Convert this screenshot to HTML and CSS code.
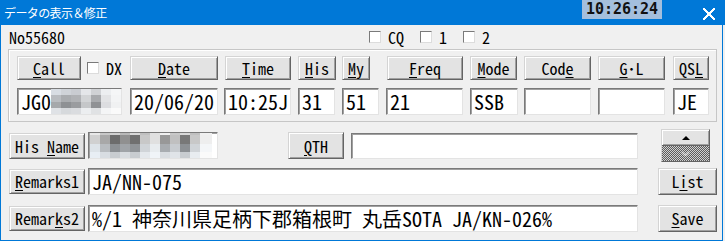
FILE: index.html
```html
<!DOCTYPE html>
<html lang="ja">
<head>
    <meta charset="UTF-8">
    <title>データの表示＆修正</title>
    <link rel="stylesheet" href="styles.css">
</head>
<body>
<div class="window">
    <div class="titlebar">
        <span class="title">データの表示＆修正</span>
        <span class="clock">10:26:24</span>
        <span class="close"></span>
    </div>

    <div class="client">
        <div class="top-row">
            <span class="qso-no">No55680</span>
            <label class="check"><span class="box"></span>CQ</label>
            <label class="check"><span class="box"></span>1</label>
            <label class="check"><span class="box"></span>2</label>
        </div>

        <div class="group">
            <div class="log-grid">
                <div class="cell">
                    <button class="btn b-call"><u>C</u>all</button>
                    <label class="check dx"><span class="box"></span>DX</label>
                </div>
                <div class="cell"><button class="btn b-date"><u>D</u>ate</button></div>
                <div class="cell"><button class="btn b-time"><u>T</u>ime</button></div>
                <div class="cell"><button class="btn b-his"><u>H</u>is</button></div>
                <div class="cell"><button class="btn b-my"><u>M</u>y</button></div>
                <div class="cell"><button class="btn b-freq"><u>F</u>req</button></div>
                <div class="cell"><button class="btn b-mode"><u>M</u>ode</button></div>
                <div class="cell"><button class="btn b-code">Cod<u>e</u></button></div>
                <div class="cell"><button class="btn b-gl"><u>G</u>･L</button></div>
                <div class="cell"><button class="btn b-qsl">QS<u>L</u></button></div>

                <div class="field f-call">JG0<svg class="mosaic" width="70" height="25" viewBox="0 0 70 25">
                    <rect x="0" y="0" width="10" height="6" fill="#d8dde3"/><rect x="10" y="0" width="10" height="6" fill="#cfd3d8"/><rect x="20" y="0" width="10" height="6" fill="#c9ccd1"/><rect x="30" y="0" width="10" height="6" fill="#e4e6e9"/><rect x="40" y="0" width="10" height="6" fill="#d0d2d5"/><rect x="50" y="0" width="10" height="6" fill="#eceef0"/><rect x="60" y="0" width="10" height="6" fill="#f5f6f7"/>
                    <rect x="0" y="6" width="10" height="7" fill="#b9bcc0"/><rect x="10" y="6" width="10" height="7" fill="#a9acaf"/><rect x="20" y="6" width="10" height="7" fill="#b0b2b5"/><rect x="30" y="6" width="10" height="7" fill="#d2d4d6"/><rect x="40" y="6" width="10" height="7" fill="#a8aaad"/><rect x="50" y="6" width="10" height="7" fill="#e2e3e5"/><rect x="60" y="6" width="10" height="7" fill="#f3f4f5"/>
                    <rect x="0" y="13" width="10" height="6" fill="#a5a8ab"/><rect x="10" y="13" width="10" height="6" fill="#8e9194"/><rect x="20" y="13" width="10" height="6" fill="#9a9c9f"/><rect x="30" y="13" width="10" height="6" fill="#c5c7c9"/><rect x="40" y="13" width="10" height="6" fill="#8f9194"/><rect x="50" y="13" width="10" height="6" fill="#dcdde0"/><rect x="60" y="13" width="10" height="6" fill="#f0f1f2"/>
                    <rect x="0" y="19" width="10" height="6" fill="#dfe2e6"/><rect x="10" y="19" width="10" height="6" fill="#d6d9dc"/><rect x="20" y="19" width="10" height="6" fill="#dadcdf"/><rect x="30" y="19" width="10" height="6" fill="#eceef0"/><rect x="40" y="19" width="10" height="6" fill="#e0e2e4"/><rect x="50" y="19" width="10" height="6" fill="#f4f5f6"/><rect x="60" y="19" width="10" height="6" fill="#fafafa"/>
                </svg></div>
                <div class="field f-date">20/06/20</div>
                <div class="field f-time">10:25J</div>
                <div class="field f-his">31</div>
                <div class="field f-my">51</div>
                <div class="field f-freq">21</div>
                <div class="field f-mode">SSB</div>
                <div class="field f-code"></div>
                <div class="field f-gl"></div>
                <div class="field f-qsl">JE</div>
            </div>
        </div>

        <div class="row row-name">
            <button class="btn b-side">His <u>N</u>ame</button>
            <div class="field f-name"><svg class="mosaic" width="122" height="30" viewBox="0 0 122 30">
                <rect x="0" y="0" width="10" height="6" fill="#e8e8e8"/><rect x="10" y="0" width="10" height="6" fill="#c8c8c8"/><rect x="20" y="0" width="10" height="6" fill="#d0d0d0"/><rect x="30" y="0" width="10" height="6" fill="#b8b8b8"/><rect x="40" y="0" width="10" height="6" fill="#d8d8d8"/><rect x="50" y="0" width="10" height="6" fill="#c0c0c0"/><rect x="60" y="0" width="10" height="6" fill="#e0e0e0"/><rect x="70" y="0" width="10" height="6" fill="#f0f0f0"/><rect x="80" y="0" width="10" height="6" fill="#c8c8c8"/><rect x="90" y="0" width="10" height="6" fill="#d8d8d8"/><rect x="100" y="0" width="10" height="6" fill="#c0c0c0"/><rect x="110" y="0" width="12" height="6" fill="#f0f0f0"/>
                <rect x="0" y="6" width="10" height="9" fill="#d0d0d0"/><rect x="10" y="6" width="10" height="9" fill="#a8a8a8"/><rect x="20" y="6" width="10" height="9" fill="#6c6c6c"/><rect x="30" y="6" width="10" height="9" fill="#909090"/><rect x="40" y="6" width="10" height="9" fill="#707070"/><rect x="50" y="6" width="10" height="9" fill="#c8c8c8"/><rect x="60" y="6" width="10" height="9" fill="#e0e0e0"/><rect x="70" y="6" width="10" height="9" fill="#989898"/><rect x="80" y="6" width="10" height="9" fill="#c0c0c0"/><rect x="90" y="6" width="10" height="9" fill="#787878"/><rect x="100" y="6" width="10" height="9" fill="#c8c8c8"/><rect x="110" y="6" width="12" height="9" fill="#eeeeee"/>
                <rect x="0" y="15" width="10" height="8" fill="#dde3e8"/><rect x="10" y="15" width="10" height="8" fill="#b8bcc0"/><rect x="20" y="15" width="10" height="8" fill="#8c9094"/><rect x="30" y="15" width="10" height="8" fill="#a0a4a8"/><rect x="40" y="15" width="10" height="8" fill="#909498"/><rect x="50" y="15" width="10" height="8" fill="#d0d4d8"/><rect x="60" y="15" width="10" height="8" fill="#e8ecef"/><rect x="70" y="15" width="10" height="8" fill="#a8acb0"/><rect x="80" y="15" width="10" height="8" fill="#c8ccd0"/><rect x="90" y="15" width="10" height="8" fill="#8c9094"/><rect x="100" y="15" width="10" height="8" fill="#d0d4d8"/><rect x="110" y="15" width="12" height="8" fill="#f4f6f8"/>
                <rect x="0" y="23" width="10" height="7" fill="#e8eef4"/><rect x="10" y="23" width="10" height="7" fill="#d8dde2"/><rect x="20" y="23" width="10" height="7" fill="#c8ccd0"/><rect x="30" y="23" width="10" height="7" fill="#d8dce0"/><rect x="40" y="23" width="10" height="7" fill="#c8ccd0"/><rect x="50" y="23" width="10" height="7" fill="#e4e8ec"/><rect x="60" y="23" width="10" height="7" fill="#f0f4f8"/><rect x="70" y="23" width="10" height="7" fill="#d8dce0"/><rect x="80" y="23" width="10" height="7" fill="#e0e4e8"/><rect x="90" y="23" width="10" height="7" fill="#c8ccd0"/><rect x="100" y="23" width="10" height="7" fill="#e8ecf0"/><rect x="110" y="23" width="12" height="7" fill="#fafafa"/>
            </svg></div>
            <button class="btn b-qth"><u>Q</u>TH</button>
            <div class="field f-qth"></div>
            <div class="updown">
                <span class="up"></span>
                <span class="down">
                    <svg width="9" height="6" viewBox="0 0 9 6"><path d="M1 1 L4.5 4.5 L8 1" stroke="#e8e8e8" stroke-width="1.2" fill="none"/></svg>
                </span>
            </div>
        </div>

        <div class="row row-rem1">
            <button class="btn b-side"><u>R</u>emarks1</button>
            <div class="field f-remarks">JA/NN-075</div>
            <button class="btn b-right">L<u>i</u>st</button>
        </div>

        <div class="row row-rem2">
            <button class="btn b-side">Remar<u>k</u>s2</button>
            <div class="field f-remarks">%/1 神奈川県足柄下郡箱根町 丸岳SOTA JA/KN-026%</div>
            <button class="btn b-right"><u>S</u>ave</button>
        </div>
    </div>
</div>
</body>
</html>
```

FILE: styles.css
```css
body { margin: 0; background: #fff; font-family: "Noto Sans Mono CJK JP", "Noto Sans CJK JP", monospace; }

.window { width: 725px; height: 241px; background: #f0f0f0; }

/* タイトルバー */
.titlebar { height: 25px; background: #0078d7; color: #fff; display: flex; align-items: flex-start; }
.title { font: 12px/25px "Noto Sans CJK JP", sans-serif; letter-spacing: -0.6px; padding-left: 4px; width: 578px; }
.clock {
    width: 80px; height: 19px; background: #a4bfdd; color: #111;
    font: bold 15px/19px "DejaVu Sans Mono", monospace; text-align: center;
}
/* 閉じるボタンの × */
.close {
    flex: none; width: 12px; height: 12px; margin: 8px 0 0 41px;
    background:
        linear-gradient(45deg, transparent 45%, #fff 45%, #fff 55%, transparent 55%),
        linear-gradient(-45deg, transparent 45%, #fff 45%, #fff 55%, transparent 55%);
}

.client {
    height: 216px; box-sizing: border-box;
    border: 1px solid #0078d7; border-top: none;
    margin-right: 2px;
}

.top-row { height: 24px; display: flex; align-items: center; padding-left: 8px; font-size: 16px; }
.qso-no { width: 360px; }

.check { display: inline-flex; align-items: center; margin-right: 16px; font-size: 16px; }
.box {
    display: inline-block; width: 10px; height: 10px; margin-right: 7px; background: #fff;
    border: 1px solid; border-color: #7a7a7a #dcdcdc #dcdcdc #7a7a7a;
}
.check.dx { margin-left: 6px; margin-right: 0; }

/* グループ枠 */
.group {
    margin-left: 7px; width: 709px; height: 73px; box-sizing: border-box;
    border: 1px solid #c6c6c6; box-shadow: inset 1px 1px #fff;
    padding: 6px 7px 6px 8px;
}
.log-grid {
    display: grid; grid-template-columns: 113px 94px 74px 44px 44px 84px 54px 74px 75px 36px;
    row-gap: 8px; align-items: start;
}
.cell { display: flex; align-items: center; }

.btn {
    height: 24px; padding: 0; box-sizing: border-box;
    font: 16px/20px "Noto Sans Mono CJK JP", "Noto Sans CJK JP", monospace; color: #000;
    background: #e3e3e3;
    border: 1px solid; border-color: #d4d4d4 #646464 #646464 #d4d4d4;
    box-shadow: inset 1px 1px #fff, inset -1px -1px #a0a0a0;
}
.btn u { text-decoration-thickness: 1px; text-underline-offset: 2px; }
.b-call { width: 64px; }
.b-date { width: 88px; }
.b-time { width: 66px; margin-left: 1px; }
.b-his { width: 38px; }
.b-my { width: 28px; }
.b-freq { width: 76px; margin-left: 1px; }
.b-mode { width: 47px; }
.b-code { width: 67px; }
.b-gl { width: 67px; }
.b-qsl { width: 36px; }

/* 入力欄 */
.field {
    height: 27px; box-sizing: border-box; background: #fff;
    border: 1px solid; border-color: #7a7a7a #e3e3e3 #e3e3e3 #7a7a7a;
    box-shadow: inset 1px 1px #a0a0a0;
    padding-left: 3px; display: flex; align-items: center; overflow: hidden;
    font: 20px/25px "Noto Sans Mono CJK JP", "DejaVu Sans Mono", monospace; color: #000;
    white-space: pre;
}
.mosaic { display: block; flex: none; }
.f-call { width: 105px; }
.f-date { width: 88px; }
.f-time { width: 67px; }
.f-his { width: 37px; }
.f-my { width: 37px; }
.f-freq { width: 77px; }
.f-mode { width: 48px; }
.f-code { width: 67px; }
.f-gl { width: 67px; }
.f-qsl { width: 36px; }

/* 下の行 */
.row { display: flex; align-items: center; padding-left: 8px; }
.row-name { height: 33px; margin-top: 7px; }
.row-rem1 { height: 28px; margin-top: 5px; }
.row-rem2 { height: 28px; margin-top: 9px; }

.b-side { width: 76px; height: 26px; }
.row-rem1 .b-side, .row-rem2 .b-side { height: 25px; }
.b-qth { width: 56px; height: 27px; margin-left: 70px; }
.b-right { width: 59px; height: 27px; margin-left: 20px; }

.f-name { width: 130px; margin-left: 3px; padding-left: 1px; }
.f-name .mosaic { margin-top: -4px; }
.f-qth { width: 287px; height: 26px; margin-left: 7px; }
.f-remarks { width: 550px; margin-left: 3px; }

.updown {
    width: 49px; height: 33px; margin-left: 23px; box-sizing: border-box;
    display: flex; flex-direction: column;
    border: 1px solid; border-color: #d4d4d4 #646464 #646464 #d4d4d4;
}
.up {
    height: 15px; background: #e3e3e3; box-shadow: inset 1px 1px #fff, inset -1px -1px #a0a0a0;
    display: flex; justify-content: center; align-items: center;
}
.up::before {
    content: ""; border-left: 4px solid transparent; border-right: 4px solid transparent;
    border-bottom: 4px solid #000;
}
.down {
    flex: 1; display: flex; justify-content: center; align-items: center;
    border-top: 1px solid #646464;
    background: repeating-conic-gradient(#5c5c5c 0 25%, #d0d0d0 0 50%) 0 0 / 2px 2px;
}
.down svg { display: block; }
```
